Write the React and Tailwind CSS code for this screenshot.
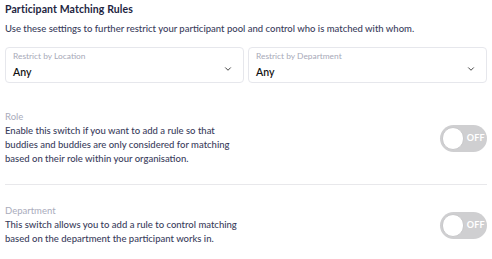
import { ChevronDown } from "lucide-react";

const rules = [
  {
    label: "Role",
    text: "Enable this switch if you want to add a rule so that buddies and buddies are only considered for matching based on their role within your organisation.",
  },
  {
    label: "Department",
    text: "This switch allows you to add a rule to control matching based on the department the participant works in.",
  },
];

function Select({ label }) {
  return (
    <div className="flex-1 h-[36px] rounded-[4px] border border-[#e6e7ec] bg-white flex items-start justify-between pl-[7px] pr-[10px] pt-[3px]">
      <div className="flex flex-col">
        <span className="text-[8.4px] leading-[11px] text-[#a7a9b8]">{label}</span>
        <span className="text-[10.5px] leading-[14px] text-[#111] font-semibold mt-[3px]">Any</span>
      </div>
      <ChevronDown size={10} strokeWidth={2.2} className="text-[#333] mt-[13px]" />
    </div>
  );
}

function Toggle() {
  return (
    <div className="w-[47px] h-[27px] rounded-full bg-[#cfcfd1] flex items-center shrink-0 p-[2px]">
      <div className="w-[23px] h-[23px] rounded-full bg-white border border-[#c8c8ca]" />
      <span className="text-[9px] font-bold text-white ml-[3px] tracking-[0.3px]">OFF</span>
    </div>
  );
}

function Rule({ rule }) {
  return (
    <div className="flex items-center justify-between">
      <div className="w-[238px]">
        <div className="text-[9.5px] leading-[14px] text-[#a9abbb]">{rule.label}</div>
        <p className="text-[9.5px] leading-[14px] text-[#3a3d5c] font-medium">{rule.text}</p>
      </div>
      <Toggle />
    </div>
  );
}

export default function App() {
  return (
    <div className="w-[492px] h-[259px] bg-white px-[5px] font-['Lato',sans-serif] text-[#2f3252] overflow-hidden">
      <h1 className="text-[10.5px] font-bold text-[#23253f] pt-[1px] leading-[17px] tracking-[0.1px]">
        Participant Matching Rules
      </h1>
      <p className="text-[9.5px] leading-[14px] mt-[4px] text-[#3a3d5c] font-medium">
        Use these settings to further restrict your participant pool and control who is matched with whom.
      </p>
      <div className="flex gap-[4px] mt-[11px] pr-[-1px]">
        <Select label="Restrict by Location" />
        <Select label="Restrict by Department" />
      </div>

      <div className="mt-[27px]">
        <Rule rule={rules[0]} />
      </div>

      <div className="h-px bg-[#e8e8eb] mt-[18px]" />

      <div className="mt-[19px]">
        <Rule rule={rules[1]} />
      </div>
    </div>
  );
}
